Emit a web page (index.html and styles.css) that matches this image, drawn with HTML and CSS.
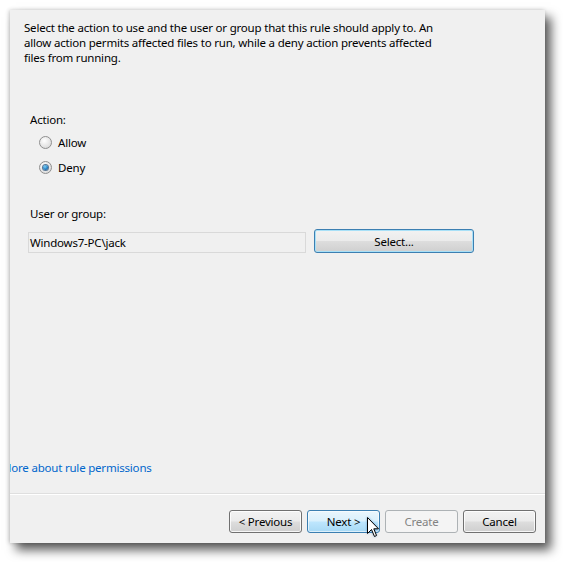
FILE: index.html
```html
<!DOCTYPE html>
<html>
<head>
<meta charset="utf-8">
<link rel="stylesheet" href="styles.css">
</head>
<body>
<div class="panel">
  <div class="content">
    <p class="desc">Select the action to use and the user or group that this rule should apply to. An allow action permits affected files to run, while a deny action prevents affected files from running.</p>
    <div class="label action-label">Action:</div>
    <div class="radio-row first"><span class="radio"></span><span>Allow</span></div>
    <div class="radio-row"><span class="radio checked"><span class="dot"></span></span><span>Deny</span></div>
    <div class="label user-label">User or group:</div>
    <div class="user-row">
      <div class="textbox">Windows7-PC\jack</div>
      <div class="btn select-btn">Select...</div>
    </div>
    <a class="link">More about rule permissions</a>
  </div>
  <div class="footer">
    <div class="btn">&lt; Previous</div>
    <div class="btn hover">Next &gt;
      <svg class="cursor" width="13" height="21" viewBox="0 0 13 21"><path d="M0.5 0.5 L0.5 16.5 L4.5 12.5 L7.5 19.5 L9.5 18.5 L6.8 11.8 L11.5 11.8 Z" fill="#fff" stroke="#000" stroke-width="1" stroke-linejoin="miter"/></svg>
    </div>
    <div class="btn disabled">Create</div>
    <div class="btn">Cancel</div>
  </div>
</div>
</body>
</html>
```
FILE: styles.css
```css
html, body {
  margin: 0;
  padding: 0;
  background: #ffffff;
}
body {
  font-family: "Noto Sans", "Open Sans", sans-serif;
  font-size: 11.5px;
  letter-spacing: -0.2px;
  color: #000;
  padding: 10px 0 19px 10px;
  box-sizing: border-box;
  min-height: 562px;
}
.panel {
  width: 535px;
  height: 533px;
  background: #f0f0f0;
  box-shadow: 6px 7px 10px rgba(0,0,0,0.65), -1px 0 4px rgba(0,0,0,0.2);
  display: flex;
  flex-direction: column;
  overflow: hidden;
}
.content {
  flex: 1;
  display: flex;
  flex-direction: column;
  border-bottom: 1px solid #dfdfdf;
  box-shadow: 0 1px 0 #ffffff;
}
.desc {
  margin: 10px 0 0 14px;
  width: 420px;
  line-height: 15px;
}
.label {
  line-height: 15px;
  margin-left: 20px;
}
.action-label {
  margin-top: 47px;
}
.radio-row {
  display: flex;
  align-items: center;
  margin-left: 29px;
  height: 15px;
  margin-top: 10px;
  gap: 6px;
}
.radio-row.first {
  margin-top: 8px;
}
.radio {
  width: 11px;
  height: 11px;
  border-radius: 50%;
  border: 1px solid #8f8f8f;
  background: radial-gradient(circle at 40% 35%, #ffffff 0%, #e6e6e6 55%, #cfcfcf 100%);
  display: flex;
  align-items: center;
  justify-content: center;
}
.dot {
  width: 5px;
  height: 5px;
  border-radius: 50%;
  background: radial-gradient(circle at 40% 35%, #7fd0f5 0%, #1f7bc0 60%, #0c3f78 100%);
  box-shadow: 0 0 0 1px #5a7895;
}
.user-label {
  margin-top: 31px;
}
.user-row {
  display: flex;
  align-items: flex-end;
  margin-top: 8px;
  margin-left: 18px;
  gap: 8px;
}
.textbox {
  width: 275px;
  height: 19px;
  border: 1px solid #d9d9d9;
  background: #f0f0f0;
  line-height: 19px;
  padding-left: 1px;
}
.btn {
  position: relative;
  width: 71px;
  height: 21px;
  border: 1px solid #707070;
  border-radius: 3px;
  background: linear-gradient(#f2f2f2 0%, #ebebeb 48%, #dddddd 52%, #cfcfcf 100%);
  box-shadow: inset 0 0 0 1px rgba(255,255,255,0.8);
  display: flex;
  align-items: center;
  justify-content: center;
  line-height: 15px;
}
.select-btn {
  width: 158px;
  height: 22px;
  border-color: #3c7fb1;
  box-shadow: inset 0 0 0 1px #a8e0f7;
}
.link {
  color: #0066cc;
  margin-top: auto;
  margin-left: -9px;
  margin-bottom: 18px;
  line-height: 15px;
}
.footer {
  height: 49px;
  display: flex;
  justify-content: flex-end;
  align-items: flex-start;
  gap: 5px;
  padding: 16px 9px 0 0;
  box-sizing: border-box;
}
.btn.hover {
  border-color: #3c7fb1;
  background: linear-gradient(#eaf6fd 0%, #d9f0fc 48%, #bee6fd 52%, #a7d9f5 100%);
  box-shadow: inset 0 0 0 1px rgba(255,255,255,0.6);
}
.btn.disabled {
  border-color: #adb2b5;
  background: #f4f4f4;
  color: #838383;
  box-shadow: none;
}
.cursor {
  position: absolute;
  left: 59px;
  top: 6px;
  filter: drop-shadow(0 0 1px rgba(60,120,180,0.6));
}
```
